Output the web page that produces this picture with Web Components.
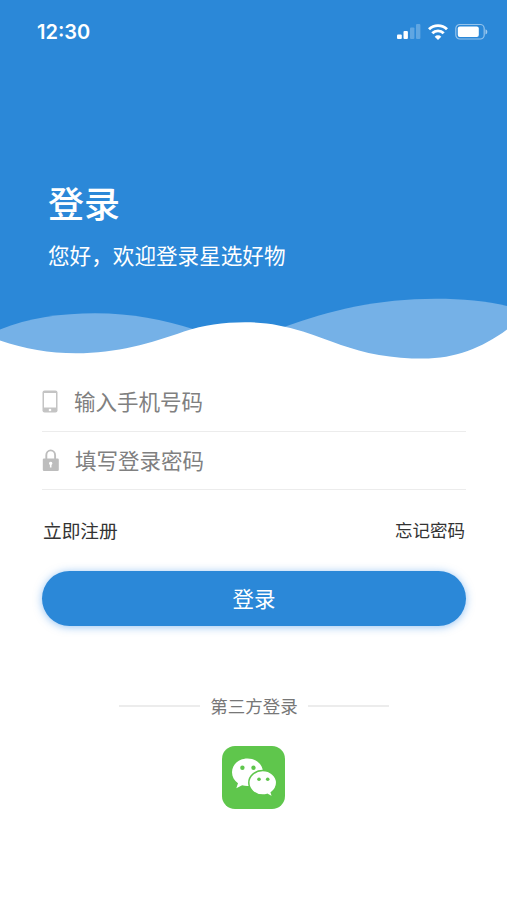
<!DOCTYPE html>
<html lang="zh-CN">
<head>
<meta charset="utf-8">
<meta name="viewport" content="width=device-width, initial-scale=1">
<title>登录</title>
<style>
  html, body {
    margin: 0;
    background: #fff;
  }

  body {
    --blue: #2b88d8;
    --line: #ececec;
    font-family: "Noto Sans CJK SC", sans-serif;
    line-height: 1;
  }
</style>
</head>
<body>
<login-page>
  <wave-header slot="header">
    <status-bar slot="status" time="12:30"></status-bar>
    <span slot="title">登录</span>
    <span slot="subtitle">您好，欢迎登录星选好物</span>
  </wave-header>
  <icon-field icon="phone">输入手机号码</icon-field>
  <icon-field icon="lock">填写登录密码</icon-field>
  <link-row>
    <span slot="start">立即注册</span>
    <span slot="end">忘记密码</span>
  </link-row>
  <pill-button>登录</pill-button>
  <line-divider>第三方登录</line-divider>
  <wechat-button></wechat-button>
</login-page>

<script>
"use strict";

(() => {
  customElements.define("login-page", class extends HTMLElement {
    constructor() {
      super();

      this.attachShadow({mode: "open"}).innerHTML = `
        <style>
          :host {
            display: flex;
            flex-direction: column;
            height: 900px;
            overflow: hidden;
            background: #fff;
          }

          main {
            display: flex;
            flex-direction: column;
            padding: 12px 41px 0 42px;
          }
        </style>
        <slot name="header"></slot>
        <main><slot></slot></main>
      `;
    }
  });

  customElements.define("status-bar", class extends HTMLElement {
    static get observedAttributes() {
      return ["time"];
    }

    constructor() {
      super();

      this.attachShadow({mode: "open"}).innerHTML = `
        <style>
          :host {
            display: flex;
            align-items: center;
            justify-content: space-between;
            height: 64px;
            box-sizing: border-box;
            padding: 0 18px 0 37px;
            color: #fff;
            font-family: Inter, sans-serif;
            font-size: 20px;
            font-weight: 600;
          }

          .icons {
            display: flex;
            align-items: center;
            gap: 7px;
          }

          svg {
            display: block;
          }
        </style>
        <span id="time"></span>
        <div class="icons">
          <svg width="24" height="18" viewBox="0 0 24 18" fill="#fff">
            <rect x="0" y="11.500" width="4.800" height="4.500" rx="1"/>
            <rect x="6.500" y="8" width="4.400" height="8" rx="1"/>
            <rect x="13" y="4.500" width="4.400" height="11.500" rx="1" opacity=".25"/>
            <rect x="19" y="1" width="4.400" height="15" rx="1" opacity=".25"/>
          </svg>
          <svg width="20" height="18" viewBox="0 0 20 18" fill="none" stroke="#fff" stroke-width="2.900">
            <path d="M1 6.300a12.800 12.800 0 0 1 18 0"/>
            <path d="M4.300 10.300a8 8 0 0 1 11.400 0"/>
            <path d="M10 17l-3.300-3.300a4.600 4.600 0 0 1 6.600 0z" fill="#fff" stroke="none"/>
          </svg>
          <svg width="34" height="18" viewBox="0 0 34 18">
            <rect x=".8" y="1.500" width="28.400" height="14.500" rx="4" fill="none" stroke="#fff" stroke-width="1.200" opacity=".5"/>
            <rect x="2.800" y="3.500" width="21" height="10.500" rx="2" fill="#fff"/>
            <path d="M30.500 6.200c2.400.8 2.400 4.400 0 5.200z" fill="#fff" opacity=".55"/>
          </svg>
        </div>
      `;

      this.timeElem = this.shadowRoot.getElementById("time");
    }

    attributeChangedCallback(name, oldVal, newVal) {
      this.timeElem.textContent = newVal;
    }
  });

  customElements.define("wave-header", class extends HTMLElement {
    constructor() {
      super();

      this.attachShadow({mode: "open"}).innerHTML = `
        <style>
          :host {
            display: flex;
            flex-direction: column;
            height: 361px;
            background: var(--blue);
            color: #fff;
          }

          .text {
            display: flex;
            flex: 1;
            flex-direction: column;
            gap: 24px;
            padding: 120px 48px 0;
          }

          h1, p {
            margin: 0;
          }

          h1 {
            font-size: 36px;
            font-weight: 500;
            line-height: 36px;
          }

          p {
            font-size: 21.6px;
            font-weight: 400;
            line-height: 22px;
          }

          svg {
            display: block;
            width: 100%;
            height: 71px;
          }
        </style>
        <slot name="status"></slot>
        <div class="text">
          <h1><slot name="title"></slot></h1>
          <p><slot name="subtitle"></slot></p>
        </div>
        <svg viewBox="0 290 507 71" preserveAspectRatio="none">
          <g fill="#75b1e7">
            <path d="M0 329.500C28 318 62 313.300 95 313.300C132 313.300 164 320 193 329V361H0z"/>
            <path d="M284 327C330 310 378 298.700 436 298.700C462 298.700 487 301 507 306V361H284z"/>
          </g>
          <path fill="#fff" d="M0 340.500C25 349 49 353.300 76 353.300C117 353.300 151 343 184 331.500C204 325 223 322.200 245 322.200C267 322.200 283 325.500 303 331.500C332 341 350 350 379 355C393 357.500 408 358.600 423 358.600C455 358.600 482 348 507 329.500V361H0z"/>
        </svg>
      `;
    }
  });

  const fieldIcons = {
    phone: `
      <svg width="16" height="23" viewBox="0 0 16 23">
        <rect x=".5" y=".5" width="15" height="22" rx="2" fill="#c4c4c4"/>
        <rect x="2" y="3" width="12" height="14.500" fill="#fff"/>
        <circle cx="8" cy="20" r="1.300" fill="#fff"/>
      </svg>
    `,
    lock: `
      <svg width="17" height="23" viewBox="0 0 17 23">
        <path d="M4.300 10V6.200a4.400 4.800 0 0 1 8.800 0V10" fill="none" stroke="#bdbdbd" stroke-width="1.900"/>
        <rect x=".8" y="9.500" width="16" height="12.500" rx="1.200" fill="#bdbdbd"/>
        <path d="M8.700 12.700a1.700 1.700 0 0 1 .8 3.200v2.600H7.900v-2.600a1.700 1.700 0 0 1 .8-3.200z" fill="#fff"/>
      </svg>
    `
  };

  customElements.define("icon-field", class extends HTMLElement {
    static get observedAttributes() {
      return ["icon"];
    }

    constructor() {
      super();

      this.attachShadow({mode: "open"}).innerHTML = `
        <style>
          :host {
            display: flex;
            align-items: center;
            height: 58.5px;
            box-sizing: border-box;
            border-bottom: 1.5px solid var(--line);
            color: #808080;
            font-size: 21.5px;
          }

          #icon {
            width: 32px;
          }

          :host([icon="lock"]) #icon {
            width: 33px;
          }

          .label {
            padding-bottom: 2px;
          }

          svg {
            display: block;
          }
        </style>
        <div id="icon"></div>
        <div class="label"><slot></slot></div>
      `;

      this.iconElem = this.shadowRoot.getElementById("icon");
    }

    attributeChangedCallback(name, oldVal, newVal) {
      this.iconElem.innerHTML = fieldIcons[newVal] || "";
    }
  });

  customElements.define("link-row", class extends HTMLElement {
    constructor() {
      super();

      this.attachShadow({mode: "open"}).innerHTML = `
        <style>
          :host {
            display: flex;
            align-items: center;
            justify-content: space-between;
            height: 81px;
            box-sizing: border-box;
            padding: 0 1px 1px;
            color: #333;
          }

          ::slotted([slot="start"]) {
            font-size: 18.7px;
          }

          ::slotted([slot="end"]) {
            font-size: 17.5px;
          }
        </style>
        <slot name="start"></slot>
        <slot name="end"></slot>
      `;
    }
  });

  customElements.define("pill-button", class extends HTMLElement {
    constructor() {
      super();

      this.attachShadow({mode: "open"}).innerHTML = `
        <style>
          :host {
            display: flex;
            align-items: center;
            justify-content: center;
            height: 55px;
            box-sizing: border-box;
            padding-bottom: 2px;
            border-radius: 28px;
            background: var(--blue);
            box-shadow: 0 1px 9px rgba(43, 136, 232, 0.5);
            color: #fff;
            font-size: 21.5px;
            cursor: pointer;
          }
        </style>
        <slot></slot>
      `;
    }
  });

  customElements.define("line-divider", class extends HTMLElement {
    constructor() {
      super();

      this.attachShadow({mode: "open"}).innerHTML = `
        <style>
          :host {
            display: flex;
            align-items: center;
            justify-content: center;
            gap: 10px;
            height: 20px;
            margin-top: 70px;
            color: #777;
            font-size: 17.5px;
          }

          :host::before,
          :host::after {
            content: "";
            width: 81px;
            height: 1.5px;
            background: var(--line);
          }
        </style>
        <slot></slot>
      `;
    }
  });

  customElements.define("wechat-button", class extends HTMLElement {
    constructor() {
      super();

      this.attachShadow({mode: "open"}).innerHTML = `
        <style>
          :host {
            display: block;
            align-self: center;
            margin: 30px 1px 0 0;
            cursor: pointer;
          }

          svg {
            display: block;
          }
        </style>
        <svg width="63" height="63" viewBox="0 0 63 63">
          <rect width="63" height="63" rx="13" fill="#5fc64c"/>
          <path fill="#fff" d="M25.500 12.500C16.800 12.500 10 18.600 10 26.300c0 4.500 2.300 8.400 6 11l-1.700 4.900 5.800-2.900c1.700.5 3.500.8 5.400.8C34.200 40.100 41 34 41 26.300S34.200 12.500 25.500 12.500z"/>
          <path fill="#fff" stroke="#5fc64c" stroke-width="1.500" d="M40.700 24.600c-7.700 0-13.900 5.400-13.900 12.200S33 49 40.700 49c1.600 0 3.100-.2 4.500-.6l5.700 3-1.600-4.900c3.300-2.300 5.400-5.800 5.400-9.700 0-6.800-6.300-12.200-14-12.200z"/>
          <g fill="#5fc64c">
            <circle cx="20.400" cy="21.800" r="2.200"/>
            <circle cx="31.500" cy="21.800" r="2.200"/>
            <circle cx="37" cy="33.200" r="1.800"/>
            <circle cx="45.700" cy="33.200" r="1.800"/>
          </g>
        </svg>
      `;
    }
  });
})();
</script>
</body>
</html>
